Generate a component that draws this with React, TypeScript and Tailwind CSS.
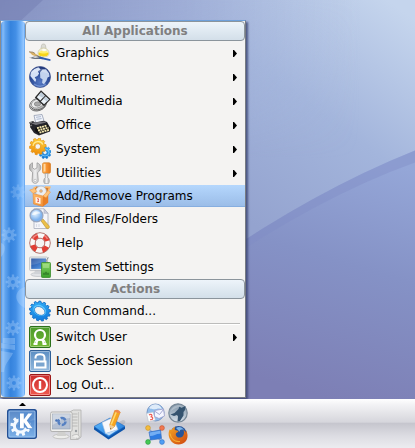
import type { ReactNode } from "react";

function gearPath(cx: number, cy: number, outer: number, inner: number, hole: number, teeth = 8) {
  const points: string[] = [];
  const step = (Math.PI * 2) / teeth;
  for (let i = 0; i < teeth; i++) {
    const corners: [number, number][] = [
      [-0.3, inner],
      [-0.2, outer],
      [0.2, outer],
      [0.3, inner]
    ];
    for (const [offset, r] of corners) {
      const a = (i + offset) * step;
      points.push(`${(cx + r * Math.sin(a)).toFixed(2)} ${(cy - r * Math.cos(a)).toFixed(2)}`);
    }
  }
  return `M${points.join("L")}ZM${cx - hole} ${cy}a${hole} ${hole} 0 1 0 ${hole * 2} 0a${hole} ${hole} 0 1 0 ${-hole * 2} 0Z`;
}

function Icon({ size = 22, children }: { size?: number; children: ReactNode }) {
  return (
    <svg width={size} height={size} viewBox={`0 0 ${size} ${size}`} className="shrink-0" aria-hidden="true">
      {children}
    </svg>
  );
}

function Fade({ id, from, to, diagonal }: { id: string; from: string; to: string; diagonal?: boolean }) {
  return (
    <linearGradient id={id} x1="0" y1="0" x2={diagonal ? "1" : "0"} y2="1">
      <stop stopColor={from} />
      <stop offset="1" stopColor={to} />
    </linearGradient>
  );
}

function GraphicsIcon() {
  return (
    <Icon>
      <path d="M12.500 3.500c0-2 4-2 4 0l.5 3h-5z" fill="#dcdcd5" stroke="#b5b4a8" strokeWidth=".6" />
      <path d="M9 12c-.5-3 2-6 5.500-6S20.500 9 20 12c-.4 2-2 3-5.500 3S9.400 14 9 12z" fill="#eeeccf" stroke="#c9c49c" strokeWidth=".6" />
      <path d="M9.600 10.500h9.800c.5 2.700-1.400 3.900-4.900 3.900s-5.300-1.200-4.900-3.900z" fill="#f6d51c" />
      <path d="M10 10.500c1-2.800 8-2.800 9 0-2 1.300-7 1.300-9 0z" fill="#ffef6b" />
      <path d="M13 7.200c1-.7 3-.7 4 0l-.4 2h-3z" fill="#fff" opacity=".8" />
      <path d="M0 9.800l4 .4 7 4.300-.8 1.300-7-2.800z" fill="#d9b268" />
      <path d="M0 9.800l4 .4 2 1.300" fill="none" stroke="#8d785c" strokeWidth=".8" />
      <path d="M0 15.500c4 .8 6-2.500 9-1.800l6 2.300-1.500 1.300C9 16.500 5 18 0 15.500z" fill="#6a717d" />
      <path d="M3 14.800l4-.8 3 1.300-4 .8z" fill="#d8d9db" />
      <path d="M11 14.800l10.500 2.400-.2 1.700L10 16.600z" fill="#2e5cb0" />
    </Icon>
  );
}

function InternetIcon() {
  return (
    <Icon>
      <defs>
        <radialGradient id="globe" cx=".5" cy=".75" r=".75">
          <stop stopColor="#5679c4" />
          <stop offset=".6" stopColor="#2b4a96" />
          <stop offset="1" stopColor="#1c3274" />
        </radialGradient>
      </defs>
      <circle cx="11" cy="11" r="10.600" fill="url(#globe)" stroke="#3c4f8c" strokeWidth=".6" />
      <path d="M1.800 7C3 4 7.500 1.500 10 1.600l1.500 2.200-2.700 1.500 1.300 2.300-1.700 2.300-2.700 1.300 1.500 2.500-1 2.300-2.400-3L1.300 10z" fill="#d5e1f5" />
      <path d="M11 6.500l2.500-3 3.500-.2 3 4 .6 3.200-2 1-1.100 3-2.500 3.800-1.900-1.200.4-3.900-2.200-1.200z" fill="#c3d3ee" />
      <path d="M2.500 7.500C4 2 17 0 19.700 8 15 5.500 7 5.500 2.500 7.500z" fill="#fff" opacity=".22" />
      <path d="M5 18c4 3 8 3 12 0" fill="none" stroke="#8caee8" strokeWidth="1.300" opacity=".6" />
    </Icon>
  );
}

function MultimediaIcon() {
  return (
    <Icon>
      <defs>
        <Fade id="speaker" from="#f6f6f6" to="#9a9a9a" diagonal />
      </defs>
      <ellipse cx="9" cy="14.500" rx="8.600" ry="6.200" transform="rotate(-20 9 14.500)" fill="url(#speaker)" stroke="#707070" strokeWidth=".9" />
      <ellipse cx="8.500" cy="13.500" rx="6.300" ry="4.300" transform="rotate(-20 8.500 13.500)" fill="#ededed" stroke="#909090" strokeWidth=".8" />
      <ellipse cx="8.500" cy="14" rx="3.200" ry="2.200" fill="#a8a8a8" stroke="#777" strokeWidth=".6" />
      <path d="M1.500 16.500c3 5 11 4 15-1" fill="none" stroke="#666" strokeWidth="1" />
      <path d="M12 .3l9.700 9-6.700 7L5.800 7.500z" fill="#2b2b2b" />
      <path d="M12.100 2.300l3.700 3.400-4.500 4.800-3.500-3.200zM16.700 6.500l3.200 2.900-4.800 4.900-3.200-2.900z" fill="#eaf1f7" />
      <path d="M12.100 2.300l3.700 3.400-2 2-4.200-2.300zM16.700 6.500l3.200 2.900-2 2-3.500-2.500z" fill="#c0cedb" />
    </Icon>
  );
}

function OfficeIcon() {
  return (
    <Icon>
      <path d="M5 1.500L13 .5l2.500 8L7 10z" fill="#f0f3fa" stroke="#8791a8" strokeWidth=".7" />
      <path d="M7 3.300l5-.7M7.600 5.300l5-.7" stroke="#9ba9c5" strokeWidth=".8" />
      <path d="M1 8.500L4 7l2 1.500 8.500-1.800L18 8l3.500 6-.5 3.500L10 21.500 5 19 1 13z" fill="#24242a" />
      <path d="M2 9.300L5 8.600l10-1.200 2.300 1.200L7 11z" fill="#75747a" />
      <path d="M6.500 13.500L18 10.200l3.300 4.300-.8 2.200L10 20l-4-3z" fill="#111" />
      <path d="M8 14.200l10-2.700M9 16.500l10.500-2.900M10.500 18.600l9.500-2.700" stroke="#f2e6b0" strokeWidth="1.900" strokeDasharray="2 .6" />
      <path d="M0 9l3-1M1 12l2-.8" stroke="#777" strokeWidth="1.400" />
    </Icon>
  );
}

function SystemIcon() {
  return (
    <Icon>
      <defs>
        <Fade id="goldGear" from="#ffd23a" to="#ee8d08" />
        <Fade id="blueGear" from="#4bbcff" to="#0e72cf" />
      </defs>
      <path d={gearPath(16, 14.5, 6.2, 5, 2, 9)} fill="url(#blueGear)" fillRule="evenodd" stroke="#1a7ed0" strokeWidth=".6" />
      <ellipse cx="16" cy="14.500" rx="4" ry="3.500" fill="none" stroke="#7fd0ff" strokeWidth=".8" />
      <g transform="rotate(12 9 8.500)">
        <path d={gearPath(8.8, 8.5, 8.4, 6.9, 2.8, 10)} fill="url(#goldGear)" fillRule="evenodd" stroke="#e08c0c" strokeWidth=".6" />
      </g>
      <path d="M4 8c.7-5 8-6 9.800-1.500" fill="none" stroke="#ffeb94" strokeWidth="1.200" />
    </Icon>
  );
}

function UtilitiesIcon() {
  return (
    <Icon>
      <defs>
        <linearGradient id="wrench">
          <stop stopColor="#a8a8a8" />
          <stop offset=".5" stopColor="#f1f1f1" />
          <stop offset="1" stopColor="#b2b2b2" />
        </linearGradient>
        <linearGradient id="handle">
          <stop stopColor="#ffc06b" />
          <stop offset=".5" stopColor="#f99430" />
          <stop offset="1" stopColor="#e07a1c" />
        </linearGradient>
      </defs>
      <path
        d="M3.500 .8v5l2.200 1.500L8 5.800v-5c4 1.400 4.500 5 3 7.400-.7 1-2 1.600-2.400 2.600l.6 7.500c.2 4-6.200 4-6.100 0l.5-7.500c0-1-1.700-1.600-2.400-2.600C-.3 5.500 0 2.200 3.500 .8z"
        fill="url(#wrench)"
        stroke="#999"
        strokeWidth=".8"
      />
      <circle cx="6.200" cy="18.500" r="1.200" fill="#fff" stroke="#999" strokeWidth=".5" />
      <rect x="13.500" y=".8" width="8" height="10.400" rx="1.500" fill="url(#handle)" stroke="#d57c22" strokeWidth=".7" />
      <path d="M15.800 2v7.500" stroke="#ffe1b4" strokeWidth="1.200" />
      <path d="M16 11.500h3l-.3 4c2 1.500 2 4.500.8 6h-4c-1.200-1.500-1.200-4.500.8-6z" fill="url(#wrench)" stroke="#999" strokeWidth=".6" />
    </Icon>
  );
}

function ProgramsIcon() {
  return (
    <Icon>
      <defs>
        <Fade id="box" from="#ffb968" to="#f08a2c" diagonal />
      </defs>
      <path d="M3 7.500L7 1.500l13 .7-1 6z" fill="#d17a2c" />
      <circle cx="12" cy="6.500" r="5.400" fill="#eceff2" stroke="#b5bac0" strokeWidth=".7" />
      <circle cx="12" cy="6" r="1.500" fill="#f0b474" stroke="#aaa" strokeWidth=".5" />
      <path d="M4 8.500l10 2.500 5-3v9.500L13.500 21.500 4.500 19z" fill="url(#box)" stroke="#e08434" strokeWidth=".5" />
      <path d="M14 11l5-3v9.500l-5.300 4z" fill="#e87f25" />
      <path d="M4 8.500L.7 5l4.800-1.500 2.500 3zM14 11l3 1.800L21.500 7 19 5.500z" fill="#ffc57c" stroke="#ea9440" strokeWidth=".5" />
      <path d="M7 1.800L4.500 3.500M16 2l4.800.3-1.500 3.500" fill="none" stroke="#ffb765" strokeWidth="1.600" />
      <path d="M6.500 12l5 1v6l-5-1.200z" fill="#fff3e5" />
      <path d="M8 13.600l1.800.4-.9 1.300 1.100 1-1.900.5" fill="none" stroke="#e0453b" strokeWidth=".8" />
    </Icon>
  );
}

function FindIcon() {
  return (
    <Icon>
      <defs>
        <radialGradient id="lens" cx=".4" cy=".35">
          <stop stopColor="#eaf6ff" />
          <stop offset="1" stopColor="#7fb3ee" />
        </radialGradient>
      </defs>
      <path d="M5 .8H15l4 4.500v15.200H5z" fill="#f5f6fa" stroke="#a8adbd" strokeWidth=".8" />
      <path d="M15 .8v4.500h4z" fill="#c9cee0" stroke="#a8adbd" strokeWidth=".6" />
      <path d="M7.500 16v3M10 16v3" stroke="#d9dce6" strokeWidth="1.200" />
      <path d="M11.900 12.700l2-1.800 6 6.800c1.500 2-1 4-2.700 2.300z" fill="#ecc048" stroke="#b08a2c" strokeWidth=".6" />
      <circle cx="7.500" cy="7.500" r="6.400" fill="url(#lens)" stroke="#97a5be" strokeWidth="1.300" />
      <path d="M3 7c.5-4 7-5 8.300-1.500C8.500 5 6 7.500 3 7z" fill="#fff" opacity=".65" />
    </Icon>
  );
}

function HelpIcon() {
  return (
    <Icon>
      <circle cx="11" cy="11" r="7.500" fill="none" stroke="#e23d33" strokeWidth="5.600" />
      <g transform="rotate(5 11 11)">
        <circle cx="11" cy="11" r="7.500" fill="none" stroke="#f8f7f6" strokeWidth="5.600" strokeDasharray="5.900 5.880" strokeDashoffset="2.950" />
      </g>
      <circle cx="11" cy="11" r="4.800" fill="#f4f3f2" stroke="#b0605a" strokeWidth=".9" />
      <circle cx="11" cy="11" r="10.300" fill="none" stroke="#a5645e" strokeWidth=".8" />
      <path d="M3.500 7c3-6 12-6 15 0" fill="none" stroke="#fff" strokeWidth="1.300" opacity=".4" />
    </Icon>
  );
}

function SettingsIcon() {
  return (
    <Icon>
      <defs>
        <Fade id="screen" from="#174296" to="#5ea5f0" diagonal />
        <Fade id="card" from="#8ed767" to="#37a02a" />
      </defs>
      <ellipse cx="9" cy="18.500" rx="7" ry="2" fill="#e1e3e6" stroke="#b3b7bc" strokeWidth=".6" />
      <path d="M6 14h6l1 4H5z" fill="#d0d3d7" />
      <rect x=".6" y="1" width="18" height="13.600" rx="1" fill="#e9ebed" stroke="#b0b5ba" strokeWidth=".7" />
      <rect x="2.200" y="2.500" width="14.800" height="10.400" fill="url(#screen)" />
      <path d="M2.200 2.500H17v3C11 6 7 9 2.200 9z" fill="#fff" opacity=".15" />
      <path d="M18 7l-.5-3 2-2.500" fill="none" stroke="#6d7278" strokeWidth=".7" />
      <rect x="12.500" y="6.500" width="9" height="15" rx=".8" fill="url(#card)" stroke="#3b8b2b" strokeWidth=".8" />
      <path d="M14 9h6M14 11h6" stroke="#c9efb2" strokeWidth=".8" />
      <path d="M15 18.800v-2M17 18.800v-3M19 18.800v-2" stroke="#1f5f1a" strokeWidth="1" />
    </Icon>
  );
}

function RunIcon() {
  return (
    <Icon>
      <defs>
        <Fade id="runGear" from="#38b8fc" to="#0b70d8" diagonal />
      </defs>
      <g transform="rotate(30 11 11) translate(0 1.200) scale(1 .9)">
        <path d={gearPath(11, 11, 10.8, 9.2, 0.1, 13)} fill="url(#runGear)" stroke="#0d68c0" strokeWidth=".8" />
        <ellipse cx="10.500" cy="10.500" rx="6.800" ry="5.700" fill="#62caff" />
        <ellipse cx="10.700" cy="11" rx="5.600" ry="4.400" fill="#f4f3f2" stroke="#1273cc" strokeWidth=".7" />
      </g>
    </Icon>
  );
}

function Tile({ id, from, to, edge, children }: { id: string; from: string; to: string; edge: string; children: ReactNode }) {
  return (
    <Icon>
      <defs>
        <Fade id={id} from={from} to={to} />
      </defs>
      <rect x=".5" y=".5" width="21" height="21" rx="1.500" fill={`url(#${id})`} stroke={edge} />
      <rect x="1.500" y="1.500" width="19" height="19" rx=".8" fill="none" stroke="#fff" opacity=".35" />
      {children}
    </Icon>
  );
}

function SwitchUserIcon() {
  return (
    <Tile id="green" from="#4b9a2b" to="#74b934" edge="#2c701a">
      <circle cx="11" cy="9" r="5" fill="none" stroke="#fff" strokeWidth="2.200" />
      <path d="M4.500 18h3c0-2.500.7-3.700 2-4.500M17.500 18h-3c0-2.500-.7-3.700-2-4.500" fill="none" stroke="#fff" strokeWidth="2" />
      <path d="M5.500 18.500c0-3 1.300-4.500 2.500-5.500M16.500 18.500c0-3-1.300-4.500-2.500-5.500" fill="none" stroke="#fff" strokeWidth="1.500" />
    </Tile>
  );
}

function LockIcon() {
  return (
    <Tile id="steel" from="#5b8ec3" to="#93b9dd" edge="#2f5f96">
      <path d="M6.500 8.500V7.500c0-4.500 9-4.500 9 0V11" fill="none" stroke="#fff" strokeWidth="2" />
      <rect x="6" y="11.500" width="10.500" height="6" fill="#7ba5cf" stroke="#fff" strokeWidth="2" />
    </Tile>
  );
}

function LogOutIcon() {
  return (
    <Tile id="red" from="#cb2a2a" to="#ef5a50" edge="#9c1717">
      <circle cx="11" cy="11" r="7" fill="none" stroke="#fff" strokeWidth="2" />
      <path d="M11 7v8" stroke="#fff" strokeWidth="2.400" />
    </Tile>
  );
}

function KMenuIcon() {
  return (
    <Icon size={30}>
      <defs>
        <Fade id="kmenu" from="#3d74bd" to="#7fb3ea" />
      </defs>
      <rect x=".7" y=".7" width="28.600" height="28.600" rx="2" fill="url(#kmenu)" stroke="#234f93" strokeWidth="1.400" />
      <rect x="2" y="2" width="26" height="26" rx="1" fill="none" stroke="#a9cdf4" opacity=".7" />
      <path d="M2 2h26v9C19 12 10 15 2 20z" fill="#fff" opacity=".14" />
      <path d={gearPath(13.5, 17, 10.2, 7.6, 4.6, 9)} fill="#f4f9ff" fillRule="evenodd" />
      <path d="M11.500 3h15v6l-4.500 3.500 4 7.500h-6l-3-3-5.500 1z" fill="#5c90d0" />
      <path d="M13 4.500h3.800v6l4.400-6h4l-5.400 7 5.700 7.700H21l-4.200-6v6H13z" fill="#fff" />
    </Icon>
  );
}

function ComputerIcon() {
  return (
    <Icon size={32}>
      <path d="M20.500 2.500l3-1.500H31v27l-3 2.500h-7.500z" fill="#e0e0de" stroke="#b0b0ae" strokeWidth=".8" />
      <path d="M28.500 3v27" stroke="#c2c2c0" strokeWidth=".8" />
      <path d="M22 5h5.500M22 8h5.500M22 11h5.500M22 14h5.500M22 17h5.500" stroke="#b5b5b3" strokeWidth=".9" />
      <circle cx="26" cy="22" r="1.200" fill="#9a9ea1" />
      <ellipse cx="11" cy="27.500" rx="8" ry="2.300" fill="#ededeb" stroke="#b3b3b1" strokeWidth=".7" />
      <path d="M8 22h7l1 5H7z" fill="#d0d0ce" />
      <rect x=".6" y="3" width="21.500" height="19.500" rx="1.500" fill="#f0f0ee" stroke="#adadab" strokeWidth=".9" />
      <rect x="2.600" y="5" width="17.500" height="15" fill="#b4c0d3" stroke="#929db0" strokeWidth=".6" />
      <path d="M2.600 5h17.500v4C13 9 8 13 2.600 16z" fill="#fff" opacity=".35" />
      <circle cx="12" cy="12.500" r="3.500" fill="none" stroke="#5580c2" strokeWidth="2.500" strokeDasharray="5.600 1.730" />
      <circle cx="6.500" cy="11.500" r="1.300" fill="#4673b8" />
      <path d="M22 27c3-2 6-2 7 0s-1 3-3 2" fill="#efefed" stroke="#a5a5a5" strokeWidth=".6" />
    </Icon>
  );
}

function NotesIcon() {
  return (
    <Icon size={33}>
      <defs>
        <Fade id="pad" from="#65c0ff" to="#1a70d4" diagonal />
      </defs>
      <path d="M22 15l8-4c3 0 3 3 1 4l-8 6z" fill="#888b95" opacity=".3" />
      <path d="M1 18.500L17 9.500l15 8.500v2L15.500 30.500 1 20.500z" fill="#0d55ac" />
      <path d="M1 17.500L17 9l15 8.200-16.500 10.800z" fill="url(#pad)" stroke="#1764bf" strokeWidth=".6" />
      <path d="M9 13.500L20 8.500l5 12-12.500 4z" fill="#f7f9fc" stroke="#a8bed8" strokeWidth=".6" />
      <path d="M12.500 24.500l12.500-4-9 6z" fill="#bfddf8" />
      <path d="M21.800 1.500l5.400 1.700-5.700 14.300-3.800 3-.9-5z" fill="#f8a51f" stroke="#cf842a" strokeWidth=".6" />
      <path d="M23.500 2.500l-5.300 13" stroke="#ffdb71" strokeWidth="1.500" />
      <path d="M21.800 1.500c1.800-1.500 4.900-.7 5.400 1.700l-.6 1.300-5.400-1.800z" fill="#ee8a4a" />
      <path d="M16.800 15.500l4.500 2-3.600 3z" fill="#efcf9d" />
      <path d="M17.300 19l1 .4-.8 1.100z" fill="#333" />
    </Icon>
  );
}

function KontactIcon() {
  return (
    <Icon size={20}>
      <circle cx="10.500" cy="9.500" r="8.500" fill="#91bdec" stroke="#6d8fbf" strokeWidth=".9" />
      <path d="M4 5C8-1 15 1 17 6c-4-2-8 2-13-1z" fill="#fff" opacity=".7" />
      <path d="M1.500 10.500l6.500-1.500 2.500 8-7 2z" fill="#fff" stroke="#b5bdca" strokeWidth=".6" />
      <path d="M4 12c3-2 4 1.500 1.500 2 3.300-.5 2.800 3.200-.5 2.700" fill="none" stroke="#ed5b54" strokeWidth="1.200" />
      <path d="M9.500 7.500L18.500 6l1 7-5.500 2.500-4.500-2z" fill="#f4f5ff" stroke="#9c9fcc" strokeWidth=".8" />
      <path d="M9.500 8l5 3.500L18.500 6.500" fill="none" stroke="#9c9fcc" strokeWidth=".9" />
    </Icon>
  );
}

function AmarokIcon() {
  return (
    <Icon size={20}>
      <defs>
        <Fade id="amarok" from="#7d92a5" to="#d5e0ea" />
      </defs>
      <circle cx="10" cy="10" r="9.200" fill="url(#amarok)" stroke="#788998" strokeWidth="1.200" />
      <path d="M2.500 11.500l4-1.500 4-4 1-2.500 1.800 1.500L17.500 3l-.5 4-1.500 2v3.500L12 18l-2.500.5.500-5-1-1.500-3 1z" fill="#34536f" />
      <path d="M3 8C5 1 14 1 16 4 11 3 7 5 3 8z" fill="#fff" opacity=".25" />
    </Icon>
  );
}

function NetworkIcon() {
  return (
    <Icon size={20}>
      <path d="M3 3l14 14M17 3L3 17" stroke="#8aa3ce" strokeWidth="1.300" />
      <path d="M4 7L15.500 5l1 8.500L5.500 15z" fill="#2e7ce2" stroke="#3a70bf" strokeWidth=".7" />
      <path d="M4.500 7.500l10.700-1.800.3 3C11 8.500 9 11 5 11z" fill="#84baf8" opacity=".8" />
      <circle cx="3" cy="3" r="2.400" fill="#f4bc3e" stroke="#c79328" strokeWidth=".6" />
      <circle cx="17" cy="3" r="2.400" fill="#ef7750" stroke="#c85732" strokeWidth=".6" />
      <circle cx="3" cy="17" r="2.400" fill="#45c855" stroke="#2a973a" strokeWidth=".6" />
      <circle cx="17" cy="17" r="2.400" fill="#4f9ff5" stroke="#3272c4" strokeWidth=".6" />
    </Icon>
  );
}

function FirefoxIcon() {
  return (
    <Icon size={20}>
      <defs>
        <Fade id="fox" from="#f5a623" to="#cd4410" diagonal />
      </defs>
      <circle cx="10.500" cy="9.500" r="8.500" fill="#285499" />
      <path d="M8 3c3-2 6-1 8 2-3-1-5 0-4 2z" fill="#7bb5ea" />
      <path d="M1.500 4.500l2 .5C4.500 3 6 2 7.500 1.700 6.500 3 6.500 4 7 5c1 .6 2.500.3 3.500 1.500C9 7.500 7.500 8 7.800 10c.8 3 5 3.500 7.200 1 1.500-2 1-4.500.5-6 1.500 1 2 2 2.200 3l.2-3C22 12 18 19.500 10.500 19.500 3.500 19.500-1.500 12 1.500 4.500z" fill="url(#fox)" />
      <path d="M2 8.500C3 14 7 17 12 16.500" fill="none" stroke="#ffc640" strokeWidth="1.200" opacity=".7" />
    </Icon>
  );
}

type Entry = { label: string; icon: ReactNode; submenu?: boolean; selected?: boolean };

const applications: Entry[] = [
  { label: "Graphics", icon: <GraphicsIcon />, submenu: true },
  { label: "Internet", icon: <InternetIcon />, submenu: true },
  { label: "Multimedia", icon: <MultimediaIcon />, submenu: true },
  { label: "Office", icon: <OfficeIcon />, submenu: true },
  { label: "System", icon: <SystemIcon />, submenu: true },
  { label: "Utilities", icon: <UtilitiesIcon />, submenu: true },
  { label: "Add/Remove Programs", icon: <ProgramsIcon />, selected: true },
  { label: "Find Files/Folders", icon: <FindIcon /> },
  { label: "Help", icon: <HelpIcon /> },
  { label: "System Settings", icon: <SettingsIcon /> }
];

const session: Entry[] = [
  { label: "Switch User", icon: <SwitchUserIcon />, submenu: true },
  { label: "Lock Session", icon: <LockIcon /> },
  { label: "Log Out...", icon: <LogOutIcon /> }
];

function MenuTitle({ children }: { children: ReactNode }) {
  return (
    <h2 className="flex h-5 items-center justify-center rounded-sm border border-[#8b949c] bg-linear-to-b from-[#edf4fa] to-[#d3dfe9] text-xs font-bold text-[#808080]">
      {children}
    </h2>
  );
}

function MenuItem({ label, icon, submenu, selected }: Entry) {
  return (
    <li>
      <button
        type="button"
        aria-haspopup={submenu ? "menu" : undefined}
        className={`flex w-full items-center gap-[5px] pl-1 pr-2 text-left text-xs text-black ${
          selected ? "h-[22px] border-b border-[#86aee0] bg-linear-to-b from-[#b5d7fd] to-[#9bbde8]" : "h-6"
        }`}
      >
        {icon}
        <span className="flex-1">{label}</span>
        {submenu && (
          <svg width="4" height="7" viewBox="0 0 4 7" aria-hidden="true">
            <path d="M0 0h1L4 3.500L1 7H0z" />
          </svg>
        )}
      </button>
    </li>
  );
}

function SideStrip() {
  return (
    <div className="flex w-6 shrink-0 items-end overflow-hidden rounded-sm bg-[linear-gradient(to_right,#4b93e8_0%,#86bcf7_8%,#5fa3ee_18%,#3583dd_40%,#438fe6_62%,#6eb0f8_82%,#93c6ff_94%,#5a9fec_100%)]">
      <svg width="24" height="216" viewBox="0 0 24 216" fill="#b7d9ff" fillRule="evenodd" aria-hidden="true">
        <g opacity=".35">
          <path d={gearPath(17, 11, 7.5, 5.2, 2, 8)} opacity=".7" />
          <path d={gearPath(8, 54, 7.5, 5.2, 2, 8)} />
          <path d={gearPath(12, 101, 7.5, 5.2, 2, 8)} />
          <path d={gearPath(12, 147, 7.5, 5.2, 2, 8)} />
          <path d={gearPath(13, 202, 7.5, 5.2, 2, 8)} />
          <path d="M0 62c5 1 5 8 0 14zM24 106c-11 3-12 15 0 21zM0 162l14 2v5L0 167zM0 170l12 2c-3 7-8 9-9 19H0zM2 157h12v6H2z" />
        </g>
      </svg>
    </div>
  );
}

function KMenu() {
  return (
    <nav
      aria-label="K Menu"
      className="flex w-[246px] border border-t-[#6ea0da] border-r-[#777b82] border-b-[#777b82] border-l-[#8b8b8b] bg-[#f4f3f2] shadow-[2px_2px_2px_#3a426fcc]"
    >
      <SideStrip />
      <div className="min-w-0 flex-1">
        <MenuTitle>All Applications</MenuTitle>
        <ul>
          {applications.map((entry) => (
            <MenuItem key={entry.label} {...entry} />
          ))}
        </ul>
        <MenuTitle>Actions</MenuTitle>
        <ul>
          <MenuItem label="Run Command..." icon={<RunIcon />} />
        </ul>
        <hr className="mx-[5px] h-[2px] border-t border-b border-t-[#bcbcbb] border-b-white" />
        <ul>
          {session.map((entry) => (
            <MenuItem key={entry.label} {...entry} />
          ))}
        </ul>
      </div>
    </nav>
  );
}

function Wallpaper() {
  return (
    <svg className="absolute inset-0 size-full" viewBox="0 0 415 400" preserveAspectRatio="none" aria-hidden="true">
      <defs>
        <linearGradient id="sky" gradientUnits="userSpaceOnUse" x1="415" y1="20" x2="260" y2="230">
          <stop stopColor="#c5d5ed" />
          <stop offset=".5" stopColor="#a3b5dc" />
          <stop offset="1" stopColor="#94a3cf" />
        </linearGradient>
        <linearGradient id="skyLeft" gradientUnits="userSpaceOnUse" x1="0" y1="0" x2="360" y2="0">
          <stop stopColor="#8490c0" />
          <stop offset=".5" stopColor="#9caad4" stopOpacity=".8" />
          <stop offset="1" stopColor="#b4c5e5" stopOpacity="0" />
        </linearGradient>
        <linearGradient id="skyFade" x1="0" y1="0" x2="0" y2="1">
          <stop stopColor="#fff" />
          <stop offset=".4" stopColor="#000" />
        </linearGradient>
        <mask id="skyMask">
          <path d="M0 0h415v400H0z" fill="url(#skyFade)" />
        </mask>
        <linearGradient id="hill" gradientUnits="userSpaceOnUse" x1="400" y1="165" x2="330" y2="400">
          <stop stopColor="#95a7d8" />
          <stop offset=".45" stopColor="#8592c6" />
          <stop offset="1" stopColor="#7d7fb5" />
        </linearGradient>
      </defs>
      <path d="M0 0h415v400H0z" fill="url(#sky)" />
      <path d="M0 0h415v400H0z" fill="url(#skyLeft)" mask="url(#skyMask)" />
      <path d="M0 0h43L0 40z" fill="#747db2" opacity=".5" />
      <path d="M210 264Q315 191 415 151V400H210z" fill="url(#hill)" />
      <path d="M210 264Q315 191 415 151v12Q320 197 210 272z" fill="#7f8dc6" opacity=".4" />
    </svg>
  );
}

const quickLaunch = [
  { label: "Kontact", icon: <KontactIcon /> },
  { label: "Amarok", icon: <AmarokIcon /> },
  { label: "Network", icon: <NetworkIcon /> },
  { label: "Firefox", icon: <FirefoxIcon /> }
];

function Panel() {
  return (
    <footer className="flex h-[49px] items-start bg-[linear-gradient(#ffffff_0%,#f4f4f6_10%,#d6d6dc_47%,#c6c6ce_50%,#dcdce2_75%,#ececf0_100%)] pl-[7px]">
      <button type="button" aria-label="K Menu" className="flex flex-col items-center gap-[3px] pt-1">
        <svg width="7" height="3" viewBox="0 0 7 3" aria-hidden="true">
          <path d="M0 3L3 0h1l3 3z" />
        </svg>
        <KMenuIcon />
      </button>
      <button type="button" aria-label="System Menu" className="ml-[13px] pt-[10px]">
        <ComputerIcon />
      </button>
      <button type="button" aria-label="Notes" className="ml-[11px] pt-[10px]">
        <NotesIcon />
      </button>
      <div className="ml-[19px] grid grid-cols-2 gap-x-[3px] gap-y-[2px] pt-1">
        {quickLaunch.map((app) => (
          <button key={app.label} type="button" aria-label={app.label}>
            {app.icon}
          </button>
        ))}
      </div>
    </footer>
  );
}

export default function App() {
  return (
    <div className="flex min-h-screen flex-col font-['DejaVu_Sans',sans-serif]">
      <main className="relative flex flex-1 items-end overflow-hidden pt-5 pb-px">
        <Wallpaper />
        <div className="relative">
          <KMenu />
        </div>
      </main>
      <Panel />
    </div>
  );
}
